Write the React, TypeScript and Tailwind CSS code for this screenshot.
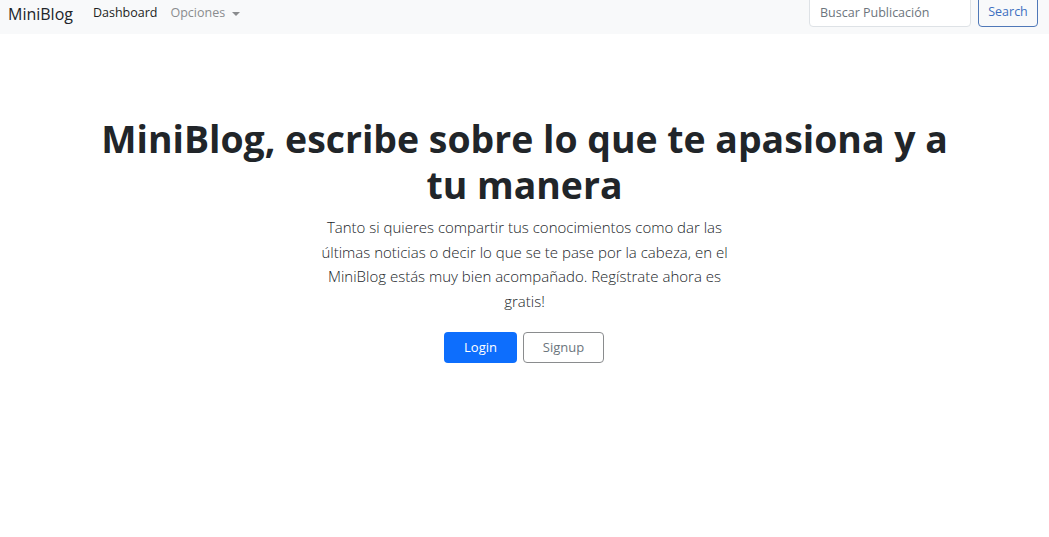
import React from 'react';

const font = { fontFamily: '"Open Sans", "Noto Sans", sans-serif' };

function Navbar() {
  return (
    <nav className="h-[38px] bg-[#f8f9fa] flex items-start pl-2 pr-[11px]">
      <div className="h-[35px] flex items-center">
        <a className="text-[16px] text-[#212529] mr-[20px]">MiniBlog</a>
        <a className="text-[12.5px] text-[#1c1f23] mr-[13px]">Dashboard</a>
        <button className="text-[12.5px] text-[#8a8c8e] flex items-center gap-[7px]">
          Opciones
          <span className="w-0 h-0 border-l-[4px] border-r-[4px] border-t-[4px] border-l-transparent border-r-transparent border-t-[#8a8c8e]" />
        </button>
      </div>
      <div className="ml-auto flex items-center gap-[7px]">
        <input
          placeholder="Buscar Publicación"
          className="w-[162px] h-[31px] rounded-[4px] border border-[#dee2e6] bg-white px-[10px] pt-[2px] text-[12.5px] placeholder:text-[#6c757d] outline-none"
        />
        <button className="h-[31px] w-[60px] rounded-[4px] border border-[#4f78b8] text-[#3d6fc0] text-[12.5px] pt-[2px] bg-transparent">
          Search
        </button>
      </div>
    </nav>
  );
}

export default function App() {
  return (
    <div className="-mt-1 min-h-[541px] bg-white" style={font}>
      <Navbar />
      <main className="flex flex-col items-center pt-[82px]">
        <h1 className="max-w-[880px] text-center text-[37.4px] leading-[46px] font-bold text-[#212529]">
          MiniBlog, escribe sobre lo que te apasiona y a tu manera
        </h1>
        <p className="mt-[7px] w-[430px] text-center text-[15px] leading-[24.7px] font-light text-[#212529]">
          Tanto si quieres compartir tus conocimientos como dar las últimas noticias o decir lo que se te pase por la cabeza, en el MiniBlog estás muy bien acompañado. Regístrate ahora es gratis!
        </p>
        <div className="mt-[18px] flex gap-[6px] -ml-[1px]">
          <button className="w-[73px] h-[31px] rounded-[4px] bg-[#0d6efd] text-white text-[13px]">Login</button>
          <button className="w-[81px] h-[31px] rounded-[4px] border border-[#8a8c8e] text-[#6c757d] text-[13px] bg-white">Signup</button>
        </div>
      </main>
    </div>
  );
}
